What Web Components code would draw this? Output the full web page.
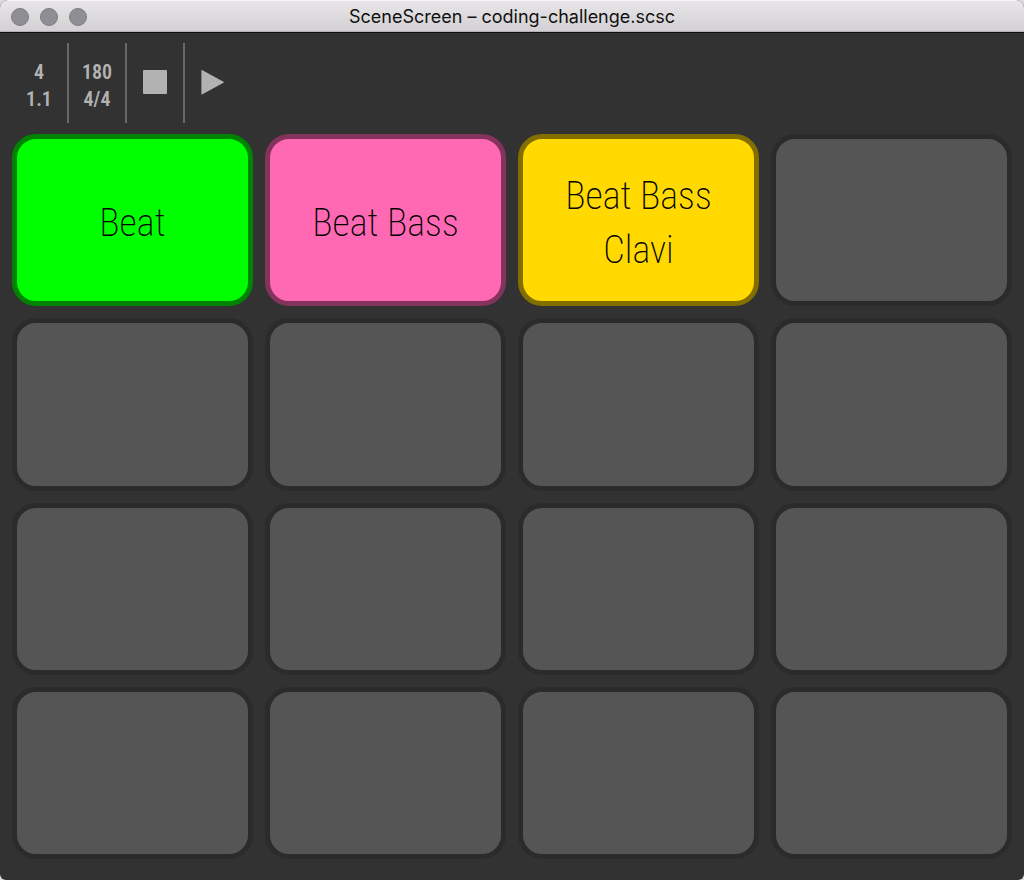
<!DOCTYPE html>
<html lang="en">
<head>
<meta charset="utf-8">
<title>SceneScreen – coding-challenge.scsc</title>
<style>
  html { background: #dcdcdc; }
  body { margin: 0; }
</style>
</head>
<body>
<scene-screen></scene-screen>

<template id="scene-screen">
  <style>
    :host {
      display: flex;
      flex-direction: column;
      box-sizing: border-box;
      min-height: 100vh;
      background: #323232;
      border-radius: 8px 8px 6px 6px;
      overflow: hidden;
    }
    main { flex: 1; display: flex; flex-direction: column; }
  </style>
  <title-bar>SceneScreen – coding-challenge.scsc</title-bar>
  <main>
    <transport-bar></transport-bar>
    <scene-grid></scene-grid>
  </main>
</template>

<template id="title-bar">
  <style>
    :host {
      display: grid;
      grid-template-columns: 1fr auto 1fr;
      align-items: center;
      box-sizing: border-box;
      height: 33px;
      padding: 0 11px;
      background: linear-gradient(#e8e6e8, #d1cfd1);
      border-top: 1px solid #f4f3f4;
      border-bottom: 1px solid #111;
      box-shadow: inset 0 -1px #b3b1b3;
    }
    .lights { display: flex; gap: 11px; }
    .lights button {
      box-sizing: border-box;
      width: 18px;
      height: 18px;
      padding: 0;
      border: 1px solid #7d7c81;
      border-radius: 50%;
      background: #8f8e94;
    }
    h1 {
      margin: 0;
      font: 400 18px/31px Inter, "Liberation Sans", sans-serif;
      color: #111;
      white-space: nowrap;
    }
  </style>
  <div class="lights">
    <button type="button" aria-label="Close"></button>
    <button type="button" aria-label="Minimize"></button>
    <button type="button" aria-label="Zoom"></button>
  </div>
  <h1><slot></slot></h1>
</template>

<template id="transport-bar">
  <style>
    :host {
      display: flex;
      height: 80px;
      padding: 10px 11px 11px;
      color: #b2b2b2;
      font: 600 20px/27px "Roboto Condensed", "Noto Sans", sans-serif;
    }
    .cell {
      box-sizing: border-box;
      width: 58px;
      display: flex;
      flex-direction: column;
      align-items: center;
      justify-content: center;
      border-right: 2px solid #686868;
    }
    .cell:last-child { border: 0; }
    .readout { padding-top: 6px; }
    button { padding: 0; border: 0; background: none; color: inherit; display: flex; }
    svg { width: 26px; height: 26px; fill: currentColor; }
  </style>
  <div class="cell readout"><span>4</span><span>1.1</span></div>
  <div class="cell readout"><span>180</span><span>4/4</span></div>
  <div class="cell">
    <button type="button" aria-label="Stop">
      <svg viewBox="0 0 26 26"><rect x="1" y="0" width="24" height="24" rx="1"/></svg>
    </button>
  </div>
  <div class="cell">
    <button type="button" aria-label="Play">
      <svg viewBox="0 0 26 26"><path d="M.4 .4Q.4 -.2 1 .1L22.5 11.8Q23 12.3 22.5 12.8L1 24.4Q.4 24.7 .4 24.1Z"/></svg>
    </button>
  </div>
</template>

<template id="scene-grid">
  <style>
    :host {
      flex: 1;
      display: grid;
      grid-template-columns: repeat(4, minmax(0, 1fr));
      grid-auto-rows: minmax(120px, 1fr);
      gap: 12px;
      padding: 0 12px 21px;
    }
  </style>
</template>

<template id="scene-pad">
  <style>
    :host { display: flex; --fill: #555; --edge: #2b2b2b; }
    :host([tone="green"]) { --fill: #00ff00; --edge: #008300; }
    :host([tone="pink"]) { --fill: #ff69b4; --edge: #84335d; }
    :host([tone="gold"]) { --fill: #ffd900; --edge: #836f00; }
    button {
      flex: 1;
      min-width: 0;
      box-sizing: border-box;
      padding: 6px 32px 0;
      border: 5px solid var(--edge);
      border-radius: 24px;
      background: var(--fill);
      color: #000;
      font: 200 38px/54px "Roboto Condensed", "Noto Sans", sans-serif;
    }
  </style>
  <button type="button"><slot></slot></button>
</template>

<script>
  class TemplateElement extends HTMLElement {
    constructor() {
      super();
      const template = document.getElementById(this.localName);
      this.attachShadow({ mode: 'open' }).append(template.content.cloneNode(true));
    }
  }

  class ScenePad extends TemplateElement {
    connectedCallback() {
      if (!this.textContent) {
        this.shadowRoot.querySelector('button').setAttribute('aria-label', 'Empty scene');
      }
    }
  }

  class SceneGrid extends TemplateElement {
    connectedCallback() {
      const scenes = [['Beat', 'green'], ['Beat Bass', 'pink'], ['Beat Bass Clavi', 'gold']];
      for (let i = 0; i < 16; i++) {
        const pad = document.createElement('scene-pad');
        if (scenes[i]) {
          pad.textContent = scenes[i][0];
          pad.setAttribute('tone', scenes[i][1]);
        }
        this.shadowRoot.append(pad);
      }
    }
  }

  customElements.define('scene-pad', ScenePad);
  customElements.define('scene-grid', SceneGrid);
  customElements.define('title-bar', class extends TemplateElement {});
  customElements.define('transport-bar', class extends TemplateElement {});
  customElements.define('scene-screen', class extends TemplateElement {});
</script>
</body>
</html>
